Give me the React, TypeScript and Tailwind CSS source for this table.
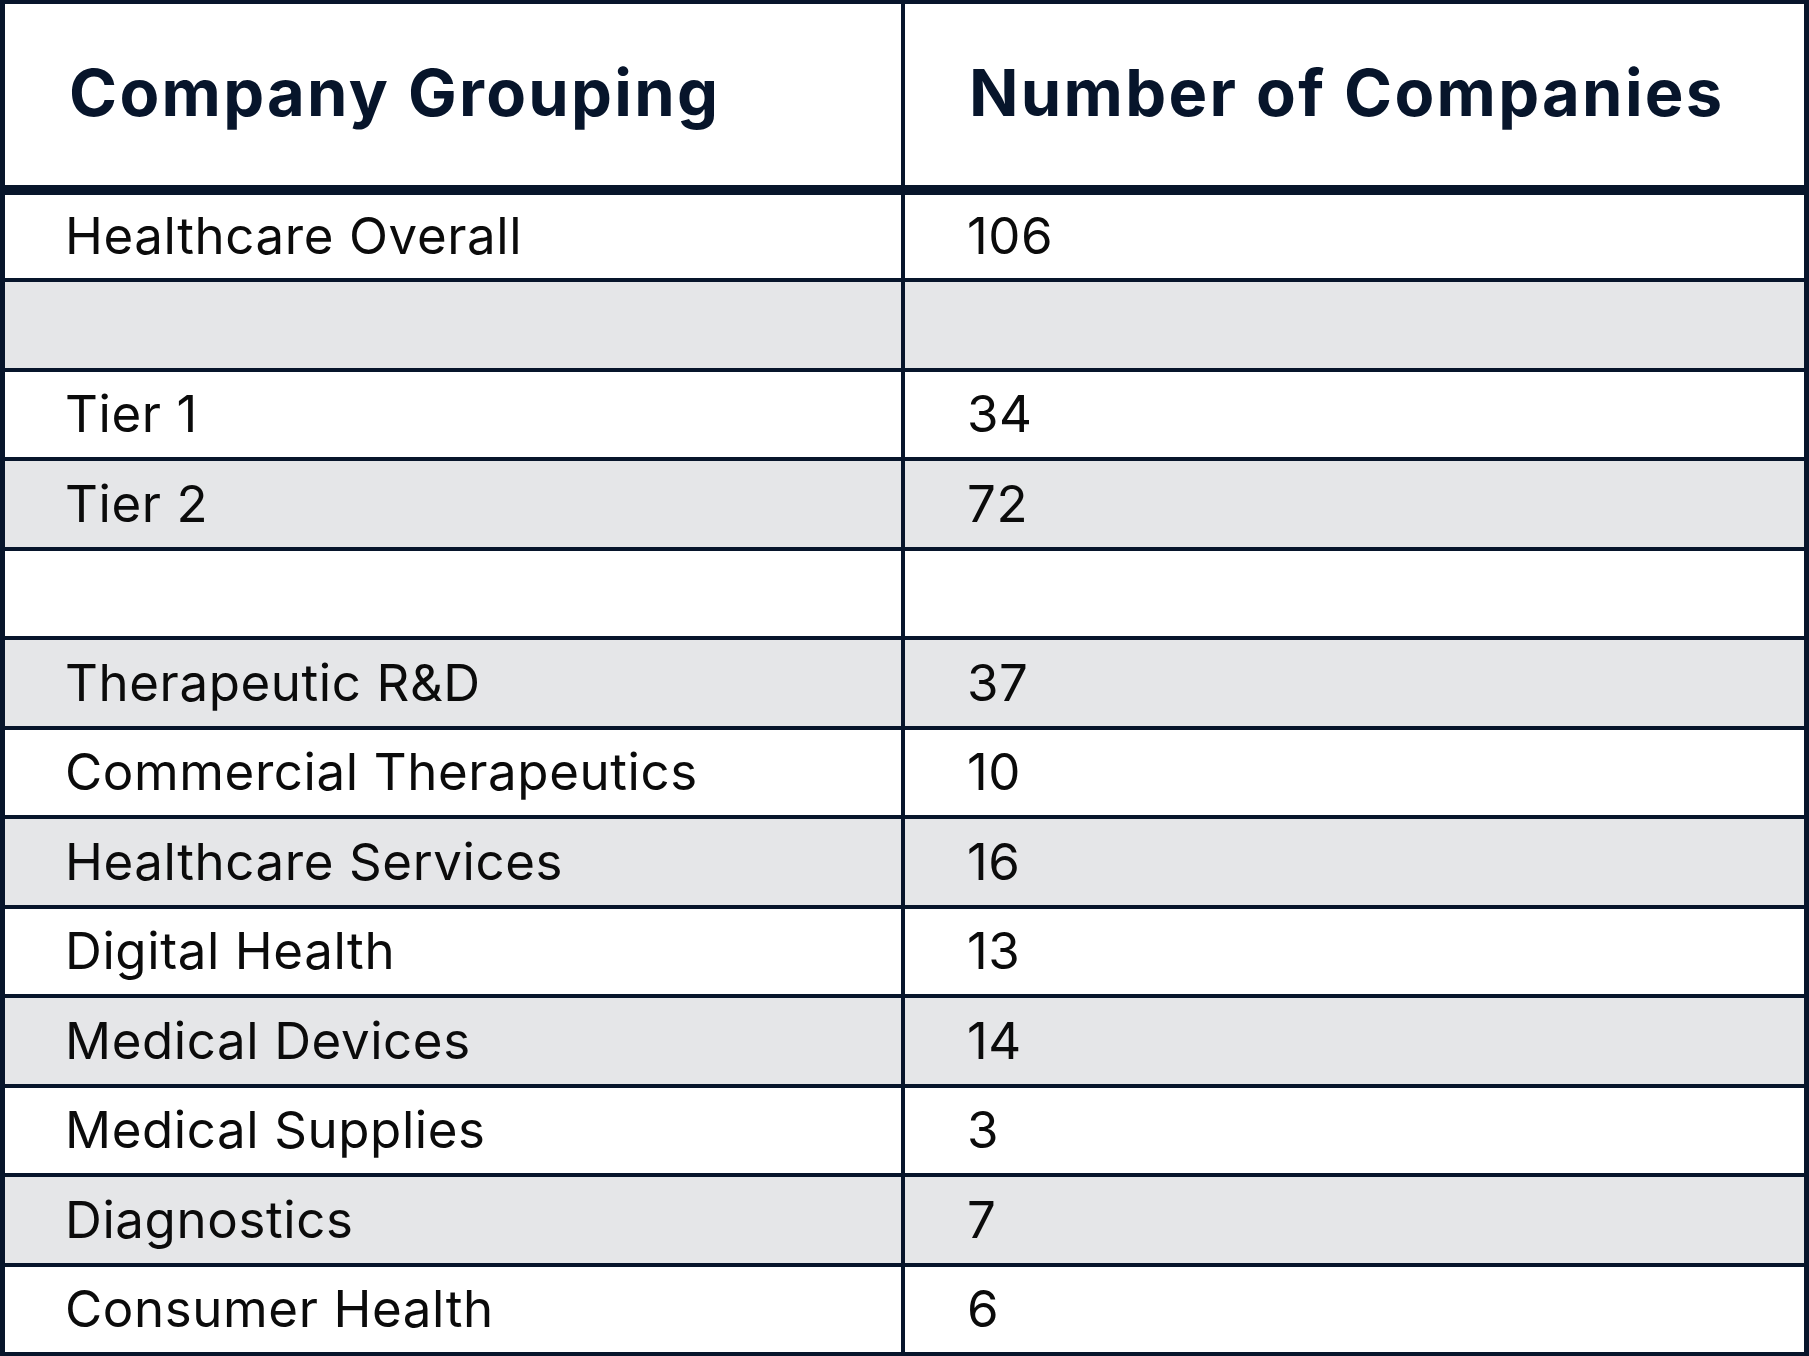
import React from 'react';

type Row = { name: string; count: string };

const rows: Row[] = [
  { name: 'Healthcare Overall', count: '106' },
  { name: '', count: '' },
  { name: 'Tier 1', count: '34' },
  { name: 'Tier 2', count: '72' },
  { name: '', count: '' },
  { name: 'Therapeutic R&D', count: '37' },
  { name: 'Commercial Therapeutics', count: '10' },
  { name: 'Healthcare Services', count: '16' },
  { name: 'Digital Health', count: '13' },
  { name: 'Medical Devices', count: '14' },
  { name: 'Medical Supplies', count: '3' },
  { name: 'Diagnostics', count: '7' },
  { name: 'Consumer Health', count: '6' },
];

const App: React.FC = () => {
  return (
    <div
      className="w-[1809px] h-[1356px] bg-white overflow-hidden"
      style={{ fontFamily: 'Inter, "Noto Sans", sans-serif' }}
    >
      <div className="border-[#07152b] border-t-4 border-l-[5px] border-r-[5px]">
        {/* Header */}
        <div className="flex h-[191px] border-b-[10px] border-[#07152b] text-[#07152b] font-bold text-[65px] tracking-[2.3px]">
          <div className="w-[900px] shrink-0 border-r-4 border-[#07152b] flex items-center pl-[64px] pb-[4px]">
            Company Grouping
          </div>
          <div className="flex-1 flex items-center pl-[64px] pb-[4px]">Number of Companies</div>
        </div>

        {/* Body */}
        {rows.map((r, i) => (
          <div
            key={i}
            className={
              'flex border-b-4 border-[#07152b] text-[51px] text-[#0b0b0b] tracking-[0.6px] ' +
              (i === 0 ? 'h-[87px] ' : 'h-[89.5px] ') +
              (i % 2 === 1 ? 'bg-[#e5e6e8]' : 'bg-white')
            }
          >
            <div className="w-[900px] shrink-0 border-r-4 border-[#07152b] flex items-center pl-[60px]">
              {r.name}
            </div>
            <div className="flex-1 flex items-center pl-[62px]">{r.count}</div>
          </div>
        ))}
      </div>
    </div>
  );
};

export default App;
